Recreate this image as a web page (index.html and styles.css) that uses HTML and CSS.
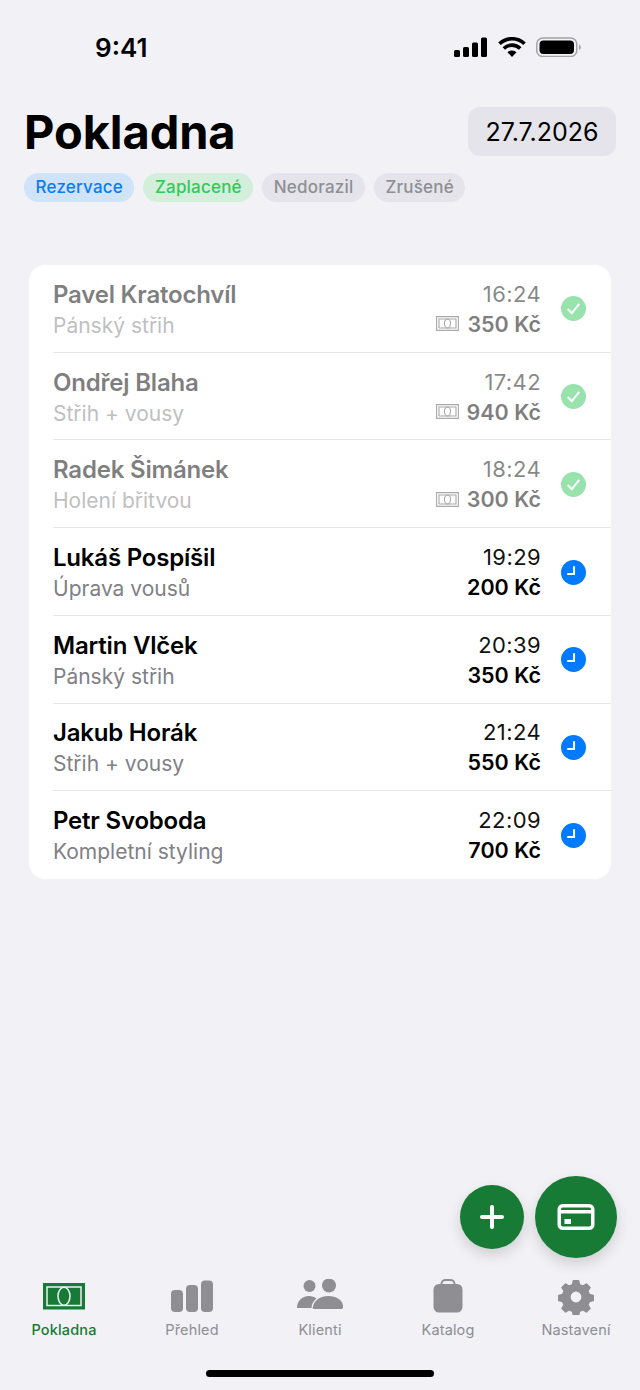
FILE: index.html
```html
<!DOCTYPE html>
<html lang="cs">
<head>
<meta charset="utf-8">
<title>Pokladna</title>
<link rel="stylesheet" href="styles.css">
</head>
<body>
<div class="screen">
  <div class="status">
    <span class="clock">9:41</span>
    <div class="status-icons">
      <svg width="33" height="20" viewBox="0 0 33 20"><rect x="0" y="13" width="6" height="7" rx="1.5"/><rect x="9" y="10" width="6" height="10" rx="1.5"/><rect x="18" y="5.500" width="6" height="14.500" rx="1.500"/><rect x="27" y="0.500" width="6" height="19.500" rx="1.500"/></svg>
      <svg width="28" height="20" viewBox="0 0 28 20"><path d="M14 20l-4.500-4.700a6.400 6.400 0 0 1 9 0z"/><path d="M5.800 11.500a11.600 11.600 0 0 1 16.400 0" class="wave"/><path d="M1.500 6.800a18 18 0 0 1 25 0" class="wave"/></svg>
      <svg width="45" height="20" viewBox="0 0 45 20"><rect x="0.750" y="1" width="40" height="18.500" rx="6" class="batt"/><rect x="3.500" y="3.500" width="34.500" height="13.500" rx="4"/><path d="M43 7.500a3 3 0 0 1 0 5.500z" fill="#a4a4a8"/></svg>
    </div>
  </div>

  <header class="head">
    <h1 class="title">Pokladna</h1>
    <div class="date">27.7.2026</div>
  </header>

  <div class="chips">
    <span class="chip blue">Rezervace</span>
    <span class="chip green">Zaplacené</span>
    <span class="chip grey">Nedorazil</span>
    <span class="chip grey">Zrušené</span>
  </div>

  <main class="card">
    <div class="row done">
      <div class="who"><div class="name">Pavel Kratochvíl</div><div class="svc">Pánský střih</div></div>
      <div class="when"><div class="time">16:24</div><div class="price"><svg class="bill" viewBox="0 0 23 15"><path d="M.6.600h21.800v13.800H.6z"/><path d="M3 3h17v9H3z"/><ellipse cx="11.500" cy="7.500" rx="3" ry="4.500"/></svg>350 Kč</div></div>
      <span class="stat ok"><svg viewBox="0 0 24 24"><path d="M6.500 12.500l3.800 4 7.200-9"/></svg></span>
    </div>
    <div class="row done">
      <div class="who"><div class="name">Ondřej Blaha</div><div class="svc">Střih + vousy</div></div>
      <div class="when"><div class="time">17:42</div><div class="price"><svg class="bill" viewBox="0 0 23 15"><path d="M.6.600h21.800v13.800H.6z"/><path d="M3 3h17v9H3z"/><ellipse cx="11.500" cy="7.500" rx="3" ry="4.500"/></svg>940 Kč</div></div>
      <span class="stat ok"><svg viewBox="0 0 24 24"><path d="M6.500 12.500l3.800 4 7.200-9"/></svg></span>
    </div>
    <div class="row done">
      <div class="who"><div class="name">Radek Šimánek</div><div class="svc">Holení břitvou</div></div>
      <div class="when"><div class="time">18:24</div><div class="price"><svg class="bill" viewBox="0 0 23 15"><path d="M.6.600h21.800v13.800H.6z"/><path d="M3 3h17v9H3z"/><ellipse cx="11.500" cy="7.500" rx="3" ry="4.500"/></svg>300 Kč</div></div>
      <span class="stat ok"><svg viewBox="0 0 24 24"><path d="M6.500 12.500l3.800 4 7.200-9"/></svg></span>
    </div>
    <div class="row">
      <div class="who"><div class="name">Lukáš Pospíšil</div><div class="svc">Úprava vousů</div></div>
      <div class="when"><div class="time">19:29</div><div class="price">200 Kč</div></div>
      <span class="stat wait"><svg viewBox="0 0 24 24"><path d="M12.500 6v7.500H6"/></svg></span>
    </div>
    <div class="row">
      <div class="who"><div class="name">Martin Vlček</div><div class="svc">Pánský střih</div></div>
      <div class="when"><div class="time">20:39</div><div class="price">350 Kč</div></div>
      <span class="stat wait"><svg viewBox="0 0 24 24"><path d="M12.500 6v7.500H6"/></svg></span>
    </div>
    <div class="row">
      <div class="who"><div class="name">Jakub Horák</div><div class="svc">Střih + vousy</div></div>
      <div class="when"><div class="time">21:24</div><div class="price">550 Kč</div></div>
      <span class="stat wait"><svg viewBox="0 0 24 24"><path d="M12.500 6v7.500H6"/></svg></span>
    </div>
    <div class="row">
      <div class="who"><div class="name">Petr Svoboda</div><div class="svc">Kompletní styling</div></div>
      <div class="when"><div class="time">22:09</div><div class="price">700 Kč</div></div>
      <span class="stat wait"><svg viewBox="0 0 24 24"><path d="M12.500 6v7.500H6"/></svg></span>
    </div>
  </main>

  <button class="fab fab-plus" aria-label="Přidat"><svg width="28" height="28" viewBox="0 0 28 28"><path d="M14 4v20M4 14h20"/></svg></button>
  <button class="fab fab-card" aria-label="Platba"><svg width="40" height="32" viewBox="0 0 40 32"><rect x="3.250" y="4.750" width="33.500" height="22.500" rx="3.500"/><path d="M3 10.800h34"/><rect x="8.500" y="18" width="6.500" height="5" class="solid"/></svg></button>

  <nav class="tabs">
    <div class="tab active">
      <svg class="ico" width="44" height="36" viewBox="0 0 44 36"><rect x="1" y="4" width="42" height="26.500" fill="#177a35"/><rect x="5" y="8" width="34" height="18.500" fill="none" stroke="#f1f1f6" stroke-width="1.500"/><ellipse cx="22" cy="17.200" rx="6" ry="9" fill="#177a35" stroke="#f1f1f6" stroke-width="1.500"/></svg>
      <span>Pokladna</span>
    </div>
    <div class="tab">
      <svg class="ico" width="44" height="36" viewBox="0 0 44 36"><rect x="1" y="11" width="12" height="22" rx="4"/><rect x="16" y="6" width="12" height="27" rx="4"/><rect x="31" y="1.500" width="12" height="31.500" rx="4"/></svg>
      <span>Přehled</span>
    </div>
    <div class="tab">
      <svg class="ico" width="46" height="36" viewBox="0 0 46 36"><circle cx="12.500" cy="7" r="6"/><path d="M0 28c0-7 5-12 12-12 3 0 5.500 1 7.500 2.500-3 2.500-5 5.500-5 9.500z" transform="translate(0 1)"/><circle cx="32" cy="6.500" r="7"/><path d="M17 30c-1 0-1.500-.7-1.200-2 1.200-6.500 7.500-11 15.700-11s15 4.500 14.500 11c0 1.300-.5 2-1.500 2z"/></svg>
      <span>Klienti</span>
    </div>
    <div class="tab">
      <svg class="ico" width="32" height="36" viewBox="0 0 32 36"><path d="M9.500 6.500V5c0-2.500 2-4 4-4h5c2 0 4 1.500 4 4v1.500" fill="none" stroke="#8e8e93" stroke-width="2"/><rect x="1.500" y="5" width="29" height="28.500" rx="5.500"/></svg>
      <span>Katalog</span>
    </div>
    <div class="tab">
      <svg class="ico gear" width="36" height="36" viewBox="0 0 36 36"><path fill-rule="evenodd" d="M15.500 1.800h5l.9 3.900 3.600 1.500 3.400-2.100 3.500 3.500-2.100 3.400 1.500 3.600 3.900.9v5l-3.900.9-1.500 3.600 2.100 3.400-3.500 3.500-3.400-2.100-3.600 1.500-.9 3.900h-5l-.9-3.900-3.600-1.500-3.400 2.100-3.500-3.500 2.100-3.400-1.500-3.600-3.900-.9v-5l3.900-.9 1.500-3.600-2.100-3.400 3.500-3.500 3.400 2.100 3.600-1.500zM18 11.800a6.200 6.200 0 1 0 0 12.400 6.200 6.200 0 0 0 0-12.400z"/></svg>
      <span>Nastavení</span>
    </div>
  </nav>

  <div class="home-wrap"><div class="home"></div></div>
</div>
</body>
</html>
```
FILE: styles.css
```css
* { box-sizing: border-box; }
html, body { margin: 0; padding: 0; }
body { font-family: Inter, "Liberation Sans", sans-serif; background: #f1f1f6; color: #000; }
.screen { position: relative; width: 640px; height: 1390px; display: flex; flex-direction: column; background: #f1f1f6; overflow: hidden; }

.status { height: 107px; flex: none; padding: 32px 59px 0 95px; display: flex; justify-content: space-between; align-items: flex-start; }
.clock { font-size: 26px; line-height: 31px; font-weight: 600; }
.status-icons { display: flex; align-items: center; gap: 10.500px; padding-top: 5px; }
.status-icons svg { display: block; fill: #000; }
.status-icons .wave { fill: none; stroke: #000; stroke-width: 3.600; }
.status-icons .batt { fill: none; stroke: #a4a4a8; stroke-width: 1.500; }

.head { flex: none; display: flex; justify-content: space-between; align-items: center; padding: 0 24px; height: 49px; }
.title { margin: 0; font-size: 47px; line-height: 49px; font-weight: 700; letter-spacing: -0.1px; }
.date { width: 148px; height: 49px; border-radius: 12px; background: #e4e4ea; font-size: 25px; display: flex; align-items: center; justify-content: center; }

.chips { flex: none; display: flex; gap: 9px; padding: 17px 24px 0; height: 63px; }
.chip { height: 29px; border-radius: 15px; padding: 0 11.500px; font-size: 17px; line-height: 29px; font-weight: 500; letter-spacing: .2px; }
.blue { background: #cfe3fb; color: #0a7cf5; }
.green { background: #d3efdc; color: #34c759; }
.grey { background: #e4e4ea; color: #8e8e93; }

.card { flex: none; margin: 46px 29px 0; height: 614px; background: #fff; border-radius: 16px; display: flex; flex-direction: column; overflow: hidden; }
.row { flex: 1; display: flex; align-items: center; padding: 0 25px 0 24px; position: relative; }
.row + .row::before { content: ""; position: absolute; left: 24px; right: 0; top: -1px; height: 1px; background: #e6e6e9; }
.who { flex: 1; min-width: 0; padding-top: 2px; }
.name { font-size: 24px; line-height: 30px; font-weight: 600; letter-spacing: -0.2px; }
.svc { font-size: 21px; line-height: 28px; margin-top: 2px; color: #808085; }
.when { text-align: right; }
.time { font-size: 22px; line-height: 28px; color: #111; letter-spacing: .4px; }
.price { font-size: 21.500px; line-height: 28px; margin-top: 2px; font-weight: 600; display: flex; justify-content: flex-end; align-items: center; gap: 8px; }
.bill { width: 23px; height: 15px; fill: none; stroke: #555; stroke-width: 1.100; }
.stat { flex: none; width: 25px; height: 25px; border-radius: 50%; margin-left: 20px; display: flex; }
.stat svg { width: 25px; height: 25px; fill: none; stroke: #fff; stroke-width: 2; }
.ok { background: #34c759; }
.wait { background: #007aff; }
.done .who, .done .when, .done .stat { opacity: .5; }

.fab { position: absolute; border: 0; padding: 0; border-radius: 50%; background: #177a35; display: flex; align-items: center; justify-content: center; box-shadow: 0 6px 14px rgba(0,0,0,.14); }
.fab svg { display: block; fill: none; stroke: #fff; }
.fab-plus { left: 460px; top: 1185px; width: 64px; height: 64px; }
.fab-plus svg { stroke-width: 4; stroke-linecap: round; }
.fab-card { left: 535px; top: 1176px; width: 82px; height: 82px; }
.fab-card svg { stroke-width: 3.500; }
.fab-card .solid { fill: #fff; stroke: none; }

.tabs { margin-top: auto; flex: none; height: 76px; display: grid; grid-template-columns: repeat(5, 1fr); }
.tab { display: flex; flex-direction: column; align-items: center; font-size: 14.500px; font-weight: 400; letter-spacing: .15px; color: #8e8e93; }
.tab .ico { display: block; height: 36px; fill: #8e8e93; margin-top: 4px; margin-bottom: 6px; }
.tab .gear { stroke: #8e8e93; stroke-width: 1.600; stroke-linejoin: round; }
.tab span { line-height: 18px; }
.active { color: #177a35; font-weight: 500; }
.home-wrap { flex: none; height: 39px; display: flex; justify-content: center; padding-top: 19px; }
.home { width: 228px; height: 7px; border-radius: 4px; background: #000; }
```
